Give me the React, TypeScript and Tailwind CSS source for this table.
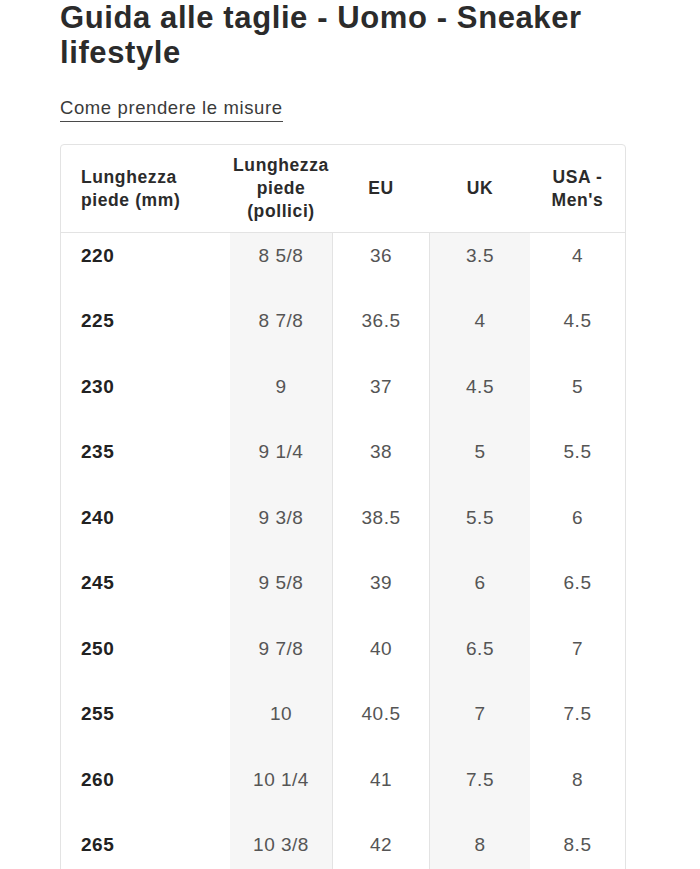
import React from "react";

const rows = [
  ["220", "8 5/8", "36", "3.5", "4"],
  ["225", "8 7/8", "36.5", "4", "4.5"],
  ["230", "9", "37", "4.5", "5"],
  ["235", "9 1/4", "38", "5", "5.5"],
  ["240", "9 3/8", "38.5", "5.5", "6"],
  ["245", "9 5/8", "39", "6", "6.5"],
  ["250", "9 7/8", "40", "6.5", "7"],
  ["255", "10", "40.5", "7", "7.5"],
  ["260", "10 1/4", "41", "7.5", "8"],
  ["265", "10 3/8", "42", "8", "8.5"],
];

const font = { fontFamily: '"Liberation Sans", Arial, sans-serif' };

const App = () => {
  return (
    <div className="h-[869px] overflow-hidden bg-white pl-[60px]" style={font}>
      <h1 className="w-[560px] text-[31px] font-bold leading-[35px] tracking-[0.6px] text-[#2b2b2b]">
        Guida alle taglie - Uomo - Sneaker lifestyle
      </h1>
      <div className="mt-[26px]">
        <a className="inline-block border-b-[1.5px] border-[#4a4a4a] pb-[1px] text-[18.5px] leading-[24px] tracking-[0.6px] text-[#3a3a3a]">
          Come prendere le misure
        </a>
      </div>

      <div className="mt-[22px] w-[566px] overflow-hidden rounded-[4px] border border-[#e3e3e3]">
        <div className="grid grid-cols-[169px_102px_98px_100px_95px] border-b border-[#e3e3e3] text-[17.5px] font-bold leading-[23px] tracking-[0.6px] text-[#2b2b2b]">
          <div className="flex h-[87px] items-center pl-[20px]">
            Lunghezza
            <br />
            piede (mm)
          </div>
          <div className="flex items-center justify-center text-center">
            Lunghezza
            <br />
            piede
            <br />
            (pollici)
          </div>
          <div className="flex items-center justify-center">EU</div>
          <div className="flex items-center justify-center">UK</div>
          <div className="flex items-center justify-center text-center">
            USA -
            <br />
            Men's
          </div>
        </div>
        <div className="grid grid-cols-[169px_102px_98px_100px_95px] text-[19px] leading-[22px] tracking-[0.5px]">
          <div>
            {rows.map((r) => (
              <div key={r[0]} className="h-[65.5px] pl-[20px] pt-[11.5px] font-bold text-[#222]">
                {r[0]}
              </div>
            ))}
          </div>
          <div className="bg-[#f6f6f6]">
            {rows.map((r) => (
              <div key={r[0]} className="h-[65.5px] pt-[11.5px] text-center text-[#555]">
                {r[1]}
              </div>
            ))}
          </div>
          <div className="border-x border-[#e3e3e3]">
            {rows.map((r) => (
              <div key={r[0]} className="h-[65.5px] pt-[11.5px] text-center text-[#555]">
                {r[2]}
              </div>
            ))}
          </div>
          <div className="bg-[#f6f6f6]">
            {rows.map((r) => (
              <div key={r[0]} className="h-[65.5px] pt-[11.5px] text-center text-[#555]">
                {r[3]}
              </div>
            ))}
          </div>
          <div>
            {rows.map((r) => (
              <div key={r[0]} className="h-[65.5px] pt-[11.5px] text-center text-[#555]">
                {r[4]}
              </div>
            ))}
          </div>
        </div>
      </div>
    </div>
  );
};

export default App;
